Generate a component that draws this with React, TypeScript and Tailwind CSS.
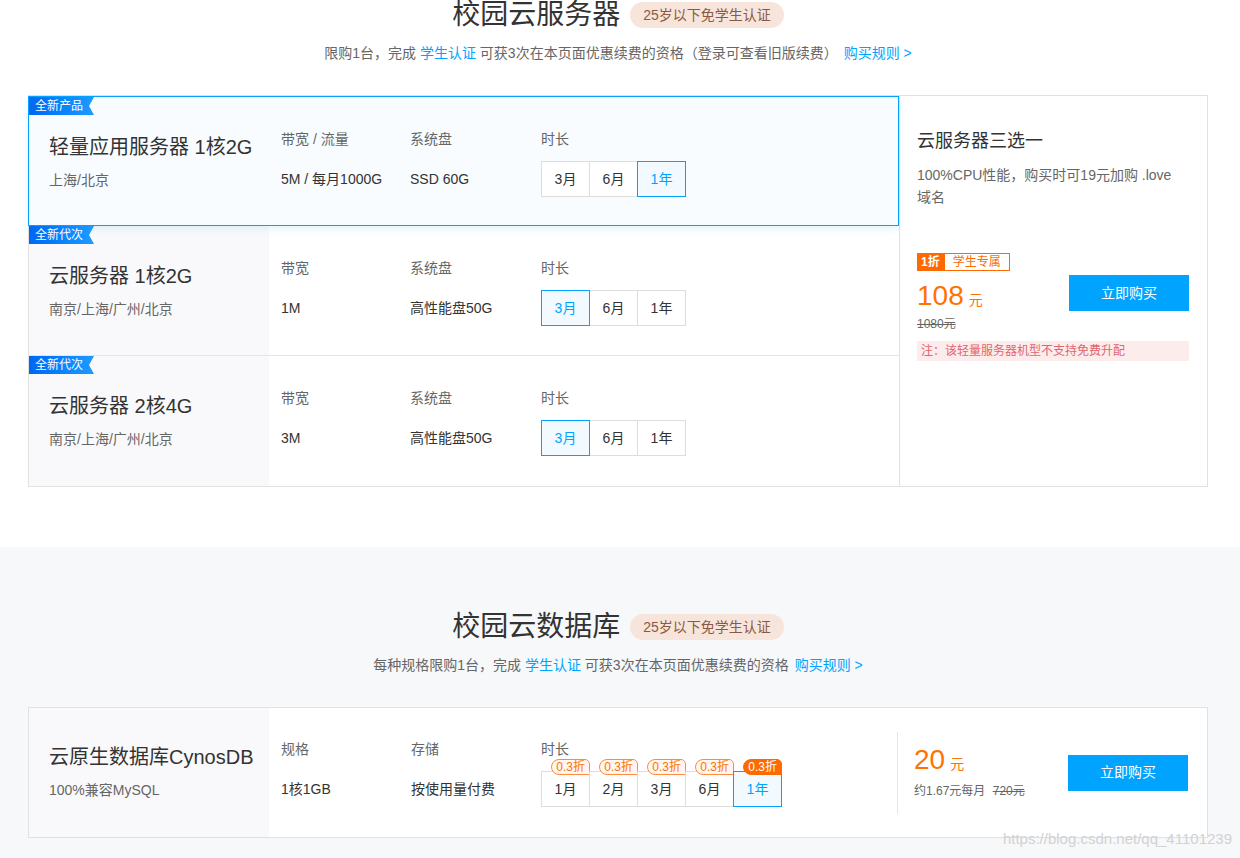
import React from 'react';

type Spec = { label: string; value: string };

const BLUE = 'text-[#00a4ff]';

function SectionHead({ title, children }: { title: string; children: React.ReactNode }) {
  return (
    <div className="flex flex-col items-center">
      <div className="flex items-center gap-[10px]">
        <h2 className="text-[28px] leading-[30px] font-normal text-[#333]">{title}</h2>
        <span className="h-[26px] rounded-full bg-[#f7e5db] px-[13px] text-[14px] leading-[26px] text-[#8b5a44]">
          25岁以下免学生认证
        </span>
      </div>
      <p className="mt-[13px] text-[14px] leading-[20px] text-[#666]">{children}</p>
    </div>
  );
}

function Tag({ label }: { label: string }) {
  return (
    <span className="absolute left-0 top-0 z-10 h-[18px] bg-linear-to-r from-[#0067f5] to-[#1e9bff] pl-[6px] pr-[11px] text-[12px] leading-[18px] text-white [clip-path:polygon(0_0,100%_0,calc(100%_-_5px)_50%,100%_100%,0_100%)]">
      {label}
    </span>
  );
}

function Durations({ options, selected, badges }: { options: string[]; selected: string; badges?: boolean }) {
  return (
    <div className="flex h-[36px]">
      {options.map((o) => {
        const sel = o === selected;
        return (
          <div
            key={o}
            className={`relative -ml-px flex h-[36px] w-[49px] items-center justify-center border text-[14px] first:ml-0 ${
              sel ? 'z-10 border-[#00a4ff] bg-[#f2faff] text-[#00a4ff]' : 'border-[#dddddd] bg-white text-[#333]'
            }`}
          >
            {o}
            {badges && (
              <span
                className={`absolute right-[-1px] top-[-13px] h-[16px] rounded-tl-[8px] rounded-tr-[5px] rounded-bl-[8px] border px-[4px] text-[12px] leading-[14px] ${
                  sel ? 'border-[#ff6a00] bg-[#ff6a00] text-white' : 'border-[#ff8a3d] bg-[#fff6f0] text-[#ff7200]'
                }`}
              >
                0.3折
              </span>
            )}
          </div>
        );
      })}
    </div>
  );
}

function SpecCol({ spec, width }: { spec: Spec; width: string }) {
  return (
    <div className={width}>
      <div className="text-[14px] leading-[20px] text-[#666]">{spec.label}</div>
      <div className="mt-[12px] flex h-[36px] items-center text-[14px] text-[#333]">{spec.value}</div>
    </div>
  );
}

function ServerRow({
  tag,
  title,
  sub,
  specs,
  selected,
  active,
  last,
}: {
  tag: string;
  title: string;
  sub: string;
  specs: Spec[];
  selected: string;
  active?: boolean;
  last?: boolean;
}) {
  return (
    <div
      className={`relative flex h-[130px] ${
        active
          ? '-ml-px z-10 border border-[#00a4ff] bg-[#f8fcff] shadow-[0_3px_8px_rgba(0,164,255,0.12)]'
          : last
          ? ''
          : 'border-b border-[#e5e5e5]'
      }`}
    >
      <Tag label={tag} />
      <div className={`w-[240px] pl-[20px] pt-[36px] ${active ? '' : 'bg-[#f9f9fb]'}`}>
        <div className="text-[20px] leading-[28px] text-[#333]">{title}</div>
        <div className="mt-[9px] text-[14px] leading-[20px] text-[#666]">{sub}</div>
      </div>
      <div className="flex pl-[12px] pt-[32px]">
        <SpecCol spec={specs[0]} width="w-[129px]" />
        <SpecCol spec={specs[1]} width="w-[131px]" />
        <div>
          <div className="text-[14px] leading-[20px] text-[#666]">时长</div>
          <div className="mt-[12px]">
            <Durations options={['3月', '6月', '1年']} selected={selected} />
          </div>
        </div>
      </div>
    </div>
  );
}

export default function App() {
  return (
    <div className="min-h-[858px] font-['Liberation_Sans','Noto_Sans_CJK_SC',sans-serif]">
      {/* 校园云服务器 */}
      <div className="bg-white pb-[60px]">
        <div className="ml-[28px] w-[1180px]">
          <SectionHead title="校园云服务器">
            限购1台，完成 <span className={BLUE}>学生认证</span> 可获3次在本页面优惠续费的资格（登录可查看旧版续费）
            <span className={`ml-[6px] ${BLUE}`}>购买规则 &gt;</span>
          </SectionHead>

          <div className="mt-[32px] flex border border-[#e1e1e1] bg-white">
            <div className="flex flex-1 flex-col">
              <ServerRow
                active
                tag="全新产品"
                title="轻量应用服务器 1核2G"
                sub="上海/北京"
                specs={[
                  { label: '带宽 / 流量', value: '5M / 每月1000G' },
                  { label: '系统盘', value: 'SSD 60G' },
                ]}
                selected="1年"
              />
              <ServerRow
                tag="全新代次"
                title="云服务器 1核2G"
                sub="南京/上海/广州/北京"
                specs={[
                  { label: '带宽', value: '1M' },
                  { label: '系统盘', value: '高性能盘50G' },
                ]}
                selected="3月"
              />
              <ServerRow
                last
                tag="全新代次"
                title="云服务器 2核4G"
                sub="南京/上海/广州/北京"
                specs={[
                  { label: '带宽', value: '3M' },
                  { label: '系统盘', value: '高性能盘50G' },
                ]}
                selected="3月"
              />
            </div>

            <div className="w-[308px] border-l border-[#e1e1e1] pl-[17px] pr-[18px] pt-[32px]">
              <div className="text-[18px] leading-[26px] text-[#333]">云服务器三选一</div>
              <p className="mt-[10px] text-[14px] leading-[22px] text-[#666]">100%CPU性能，购买时可19元加购 .love 域名</p>
              <div className="mt-[45px] flex justify-between">
                <div>
                  <div className="flex h-[18px] text-[12px] leading-[16px]">
                    <span className="border border-[#ff6a00] bg-[#ff6a00] px-[3px] font-bold text-white">1折</span>
                    <span className="border border-[#ff6a00] px-[8px] text-[#ff6a00]">学生专属</span>
                  </div>
                  <div className="mt-[10px] flex items-baseline leading-[30px] text-[#ff7200]">
                    <span className="text-[28px]">108</span>
                    <span className="ml-[5px] text-[14px]">元</span>
                  </div>
                  <div className="mt-[1px] text-[12px] leading-[16px] text-[#666] line-through">1080元</div>
                </div>
                <button className="mt-[22px] h-[36px] w-[120px] bg-[#00a4ff] text-[14px] text-white">立即购买</button>
              </div>
              <div className="mt-[9px] h-[20px] bg-[#fcecec] pl-[4px] text-[12px] leading-[20px] text-[#e2646f]">
                注：该轻量服务器机型不支持免费升配
              </div>
            </div>
          </div>
        </div>
      </div>

      {/* 校园云数据库 */}
      <div className="relative bg-[#f7f8fa] pb-[40px] pt-[65px]">
        <div className="ml-[28px] w-[1180px]">
          <SectionHead title="校园云数据库">
            每种规格限购1台，完成 <span className={BLUE}>学生认证</span> 可获3次在本页面优惠续费的资格
            <span className={`ml-[6px] ${BLUE}`}>购买规则 &gt;</span>
          </SectionHead>

          <div className="mt-[32px] flex h-[131px] border border-[#e1e1e1] bg-white">
            <div className="w-[240px] bg-[#f9f9fb] pl-[20px] pt-[35px]">
              <div className="text-[20px] leading-[28px] text-[#333]">云原生数据库CynosDB</div>
              <div className="mt-[9px] text-[14px] leading-[20px] text-[#666]">100%兼容MySQL</div>
            </div>
            <div className="flex flex-1 pl-[12px] pt-[31px]">
              <SpecCol spec={{ label: '规格', value: '1核1GB' }} width="w-[130px]" />
              <SpecCol spec={{ label: '存储', value: '按使用量付费' }} width="w-[130px]" />
              <div>
                <div className="text-[14px] leading-[20px] text-[#666]">时长</div>
                <div className="mt-[12px]">
                  <Durations options={['1月', '2月', '3月', '6月', '1年']} selected="1年" badges />
                </div>
              </div>
            </div>
            <div className="flex w-[310px] items-center">
              <div className="h-[82px] w-px bg-[#e5e5e5]" />
              <div className="flex-1 pl-[16px]">
                <div className="flex items-baseline leading-[30px] text-[#ff7200]">
                  <span className="text-[28px]">20</span>
                  <span className="ml-[5px] text-[14px]">元</span>
                </div>
                <div className="mt-[3px] text-[12px] leading-[18px] text-[#666]">
                  约1.67元每月 <span className="ml-[4px] line-through">720元</span>
                </div>
              </div>
              <button className="mr-[19px] h-[36px] w-[120px] bg-[#00a4ff] text-[14px] text-white">立即购买</button>
            </div>
          </div>
        </div>
        <span className="absolute right-[8px] top-[283px] text-[15px] leading-[18px] text-[#d2d2d2]">
          https://blog.csdn.net/qq_41101239
        </span>
      </div>
    </div>
  );
}
